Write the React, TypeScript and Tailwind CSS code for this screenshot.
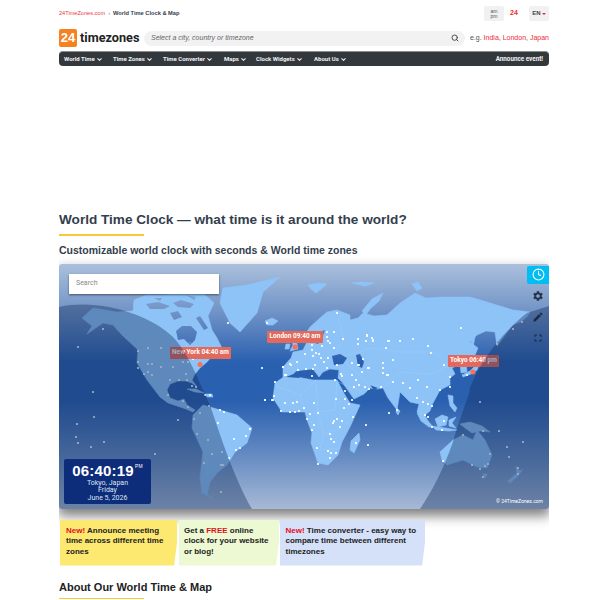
import { ChevronDown, Clock, Search } from "lucide-react";
import { MdEdit, MdFullscreen, MdSettings } from "react-icons/md";

const navItems = [
  { label: "World Time", width: "w-[49px]" },
  { label: "Time Zones", width: "w-[50px]" },
  { label: "Time Converter", width: "w-[61px]" },
  { label: "Maps", width: "w-[32px]" },
  { label: "Clock Widgets", width: "w-[58px]" },
  { label: "About Us", width: "w-auto" },
];

// continents, in page coordinates (the viewBox starts at the map's corner)
const land = [
  // North + Central America, arctic islands included
  "82,318 93,308 117,312 133,311 134,300 146,295 165,295 184,290 204,294 214,303 208,316 212,330 217,338 223,350 213,355 207,362 200,368 195,374 192,380 197,387 192,383 186,381 178,381 170,384 167,390 170,398 178,401 184,399 187,405 195,410 193,412 186,409 177,406 168,403 160,397 147,380 137,363 138,350 122,335 113,325 103,323 97,327 87,334 92,326",
  // South America
  "193,415 203,405 220,410 237,415 252,428 247,443 235,452 227,465 218,472 210,482 207,495 213,498 202,493 200,478 203,452 192,428",
  // Eurasia
  "283,367 291,358 293,352 303,350 307,342 306,333 310,327 320,318 327,312 337,310 350,315 350,320 358,318 363,313 374,316 387,315 400,303 415,293 426,298 440,297 470,297 487,302 513,310 530,312 527,317 522,321 513,325 505,335 497,346 495,332 486,331 477,335 470,342 478,348 473,360 466,362 467,372 461,373 460,364 452,368 455,374 450,378 450,385 440,390 432,405 430,411 425,415 428,422 421,416 417,412 419,404 410,402 400,392 397,410 388,398 383,388 377,389 370,388 364,394 354,399 342,382 338,378 339,370 330,369 323,372 319,377 313,369 303,370 296,371 290,378 283,377",
  // Africa
  "275,383 285,376 297,377 313,380 330,380 337,380 345,395 350,403 360,405 350,427 342,442 338,455 328,465 318,463 311,443 312,433 307,420 305,412 282,412 273,398",
  // Greenland
  "223,288 247,285 280,277 263,292 257,313 240,332 230,323 220,303",
  // Iceland, Britain, Ireland
  "265,321 272,318 278,321 273,325 267,325",
  "292,339 296,340 298,349 290,351 293,345",
  "286,344 290,344 289,349 285,349",
  // Svalbard, Novaya Zemlya and the other polar bits
  "308,285 318,283 327,284 320,290 316,293 311,289",
  "352,283 362,282 374,283 365,286",
  "362,311 372,299 383,293 379,301 370,309 366,315",
  "412,284 418,282 422,288 417,291",
  // Madagascar, Sri Lanka
  "359,433 360,440 354,453 350,450 351,441",
  "397,408 400,411 398,415 396,412",
  // Japan, Sakhalin
  "477,356 480,362 477,370 471,374 463,377 462,375 470,371 475,366",
  "472,333 475,337 473,347 471,341",
  // Philippines, Indonesia, New Guinea
  "448,395 453,396 453,403 457,408 455,412 450,406",
  "417,413 424,416 433,427 429,427 421,421",
  "432,426 445,428 457,430 449,431 436,430",
  "435,419 442,415 448,417 446,425 438,427",
  "449,420 456,417 452,423 456,428 449,426",
  "460,424 470,422 482,426 490,432 480,431 472,433 465,428",
  // Cuba, Hispaniola
  "187,389 196,389 204,393 195,392",
  "206,394 212,394 213,397 207,397",
  // Australia, New Zealand
  "440,452 453,440 463,435 473,440 477,430 485,440 492,455 487,468 477,467 463,460 447,465 442,460",
  "483,474 487,474 485,478",
  "516,466 520,472 517,474",
  "523,469 517,477 510,483 508,481 516,474",
];

// seas and lakes cut back out of the land
const water = [
  "176,331 182,326 191,326 197,332 195,340 190,345 184,339 178,340",
  "196,318 200,316 208,328 204,330",
  "146,304 158,302 170,306 164,309 150,309",
  "173,303 181,300 194,304 190,308 178,307",
  "170,313 178,311 182,317 174,320",
  "154,298 162,298 160,301",
  "186,295 196,297 194,300",
  "286,377 296,373 300,378",
  "332,356 340,354 347,358 343,364 334,365",
  "356,355 360,354 364,362 362,368 358,366",
  "316,336 322,331 325,330 322,339 318,344 315,343",
  "370,385 378,388 374,390",
];

const borders = [
  "M117 312 L117 331",
  "M138 350 L183 348 L190 342 L198 354",
  "M147 375 L160 379 L170 384",
  "M205 406 L212 425 L205 452 L208 478",
  "M276 386 L300 395 L316 380 M300 395 L305 412 M316 380 L318 412 L335 410 L337 380",
  "M318 412 L324 434 L340 428 M324 434 L320 450 L338 448",
  "M338 382 L362 392 M345 362 L370 385 L384 387 L400 372 L430 374 L448 366 L436 352 L400 352 L372 348 L344 356",
  "M306 336 L316 358 M338 318 L344 340 L336 350",
];

const cities = [
  [337, 313], [267, 323], [327, 332], [334, 332], [327, 337], [343, 339], [358, 339], [367, 336], [372, 338], [373, 341],
  [366, 341], [388, 341], [358, 344], [328, 341], [330, 343], [322, 346], [334, 348], [312, 345], [312, 350], [305, 354],
  [316, 353], [319, 354], [313, 356], [328, 358], [324, 362], [321, 358], [352, 363], [363, 359], [358, 365], [383, 363],
  [393, 360], [383, 368], [368, 368], [297, 362], [283, 367], [291, 365], [298, 370], [306, 369], [313, 369], [315, 365],
  [337, 365], [352, 375], [362, 372], [387, 375], [341, 374], [342, 376], [327, 368], [262, 368], [285, 375],
  [275, 382], [286, 375], [265, 400], [273, 400], [274, 396], [285, 403], [293, 403], [297, 402], [304, 408], [314, 403],
  [281, 411], [290, 412], [295, 412], [299, 411], [310, 414], [318, 413], [307, 419], [314, 425], [312, 430], [336, 399],
  [345, 399], [349, 404], [344, 408], [353, 417], [337, 419], [333, 423], [334, 421], [342, 421], [340, 427], [330, 434],
  [331, 439], [334, 442], [317, 448], [328, 451], [331, 453], [336, 453], [330, 458], [318, 464], [356, 443], [368, 445],
  [366, 425], [389, 413], [397, 410], [381, 387], [369, 389], [365, 387], [359, 385], [354, 387], [356, 380], [345, 391],
  [352, 400], [335, 380], [312, 376], [383, 373], [388, 375], [393, 382], [250, 429],
  [461, 328], [413, 339], [400, 341], [389, 341], [373, 340], [367, 335], [343, 339], [386, 348], [428, 346], [431, 353],
  [444, 365], [450, 377], [369, 368], [359, 365], [403, 383], [410, 388], [427, 387], [418, 380], [467, 375], [440, 390],
  [450, 387], [417, 398], [423, 402], [428, 404], [432, 406], [425, 415], [428, 417], [432, 427], [442, 430], [444, 421],
  [480, 402], [463, 435], [483, 431], [499, 431], [507, 447], [509, 457], [523, 442], [490, 454], [488, 464], [485, 466],
  [480, 469], [472, 465], [483, 477], [443, 461], [518, 468], [518, 474], [522, 322], [513, 329], [497, 344],
  [103, 329], [78, 347], [138, 351], [148, 348], [161, 348], [138, 362], [148, 364], [152, 364], [161, 367], [173, 367],
  [138, 368], [144, 374], [152, 375], [148, 372], [186, 374], [170, 380], [179, 380], [187, 380], [192, 386], [196, 387],
  [183, 362], [188, 362], [193, 359], [228, 323], [283, 367], [290, 364],
  [93, 392], [94, 417], [77, 424], [76, 437], [78, 443], [91, 447], [104, 442], [155, 454], [178, 420], [168, 395],
  [183, 401], [188, 407], [194, 419], [200, 413], [209, 406], [220, 410], [224, 412], [218, 423], [197, 434], [208, 440],
  [234, 439], [246, 436], [250, 429], [212, 454], [236, 450], [240, 448], [222, 452], [229, 458], [204, 463], [221, 465],
  [223, 465], [221, 492], [205, 395], [210, 395], [265, 400], [272, 400],
];

const markers = [
  [200, 364.5],
  [295, 347],
  [473, 372],
];

const mapLabels = [
  { text: "New York 04:40 am", pos: "left-[111px] top-[83px] w-[61px]" },
  { text: "London 09:40 am", pos: "left-[208px] top-[67px] w-[56px]" },
  { text: "Tokyo 06:40 pm", pos: "left-[389px] top-[91px] w-[51px]" },
];

const WorldMap = () => {
  return (
    <svg viewBox="59 264 490 245" className="block w-full h-full">
      <defs>
        <linearGradient id="sea" gradientUnits="userSpaceOnUse" x1="0" y1="264" x2="0" y2="509">
          <stop offset="0" stopColor="#abc0dc" />
          <stop offset="0.2" stopColor="#6f92c6" />
          <stop offset="0.4" stopColor="#2a60b0" />
          <stop offset="0.56" stopColor="#2a60b0" />
          <stop offset="0.78" stopColor="#658bc2" />
          <stop offset="1" stopColor="#a6b9d6" />
        </linearGradient>
      </defs>
      <rect x="59" y="264" width="490" height="245" fill="url(#sea)" />
      {land.map((points) => (
        <polygon key={points} points={points} fill="#8ec3f8" strokeLinejoin="round" stroke="#8ec3f8" strokeWidth="0.6" />
      ))}
      {water.map((points) => (
        <polygon key={points} points={points} fill="url(#sea)" />
      ))}
      {borders.map((d) => (
        <path key={d} d={d} fill="none" stroke="#a2cefa" strokeWidth="0.4" />
      ))}
      {cities.map(([x, y], i) => (
        <rect key={i} x={x - 0.9} y={y - 0.9} width="1.8" height="1.8" rx="0.5" fill="#ffffff" />
      ))}
      {markers.map(([x, y]) => (
        <circle key={x} cx={x} cy={y} r="2.5" fill="#ff6e4d" />
      ))}
    </svg>
  );
};

// the dark part of the globe, sits on top of the labels too
const NightShade = () => {
  return (
    <svg viewBox="59 264 490 245" className="absolute inset-0 w-full h-full">
      <path
        d="M59 307 C100 298 150 315 173 337 C190 355 200 385 210 405 C220 435 235 480 252 509 L59 509 Z"
        fill="#102a5a"
        fillOpacity="0.38"
      />
      <path
        d="M420 509 C440 480 450 450 453 442 C462 410 470 395 470 388 C480 360 505 330 527 313 L549 306 L549 509 Z"
        fill="#102a5a"
        fillOpacity="0.38"
      />
    </svg>
  );
};

export default function App() {
  return (
    <div className="ml-[59px] w-[490px] h-[600px] overflow-hidden font-['Liberation_Sans',sans-serif] text-[#333e4d]">
      {/* top strip */}
      <div className="flex items-center h-[29px] pt-[3px] pb-[5px]">
        <span className="text-[5.6px] text-[#f0353f]">24TimeZones.com</span>
        <span className="text-[5.6px] ml-[3px] text-[#4a90c0]">›</span>
        <span className="text-[5.7px] font-bold ml-[3px]">World Time Clock &amp; Map</span>
        <div className="ml-auto flex items-center">
          <div className="w-[20px] h-[15px] rounded-[2px] bg-[#f1f1f2] flex flex-col items-center justify-center text-[5px] leading-[5px] text-[#555]">
            <span>am</span>
            <span>pm</span>
          </div>
          <span className="ml-[6px] w-[19px] text-[7px] font-bold text-[#f0282d]">24</span>
          <div className="w-[20px] h-[15px] rounded-[2px] bg-[#f1f1f2] flex items-center justify-center text-[6px] font-bold text-[#444]">
            EN
            <span className="ml-[1px] border-x-[2px] border-t-[2px] border-x-transparent border-t-[#f0282d]" />
          </div>
        </div>
      </div>

      {/* logo + search */}
      <div className="flex items-center h-[18px]">
        <div className="w-[18px] h-[18px] rounded-[2px] bg-[#f58220] flex items-center justify-center text-white font-bold text-[13px]">
          24
        </div>
        <span className="ml-[3px] w-[59px] text-[12.7px] font-bold text-[#222] font-['Roboto',sans-serif]">timezones</span>
        <div className="ml-[5px] flex items-center w-[321px] h-[15px] rounded-full bg-[#f2f2f3] pl-[7px] pr-[6px]">
          <span className="italic text-[7px] text-[#666]">Select a city, country or timezone</span>
          <Search className="ml-auto w-[8px] h-[8px] text-[#333]" strokeWidth={2.5} />
        </div>
        <span className="ml-[5px] text-[7px] whitespace-nowrap text-[#555]">
          e.g. <span className="text-[#f0283c]">India</span>, <span className="text-[#f0283c]">London</span>,{" "}
          <span className="text-[#f0283c]">Japan</span>
        </span>
      </div>

      {/* nav */}
      <div className="flex items-center h-[15px] mt-[4px] rounded-[4px] bg-[#33383d] pl-[5px] pr-[6px] text-[6px] leading-none font-bold text-[#f2f2f2] border-t border-[#8a8d90] font-['Roboto',sans-serif]">
        {navItems.map((item) => (
          <div key={item.label} className={`flex items-center whitespace-nowrap ${item.width}`}>
            {item.label}
            <ChevronDown className="w-[7px] h-[7px] ml-[1px]" strokeWidth={3.5} />
          </div>
        ))}
        <span className="ml-auto text-[6.3px] leading-none">Announce event!</span>
      </div>

      {/* title block */}
      <h1 className="mt-[145px] text-[13.6px] leading-[18px] font-bold">World Time Clock — what time is it around the world?</h1>
      <div className="mt-[5px] w-[85px] h-[1.5px] bg-[#fbc63d]" />
      <h2 className="mt-[8px] text-[10.5px] leading-[13px] font-bold">Customizable world clock with seconds &amp; World time zones</h2>

      {/* map */}
      <div className="mt-[7px] w-[490px] h-[245px] rounded-[3px] shadow-[0_6px_12px_1px_rgba(0,0,0,0.5)]">
        <div className="relative w-full h-full rounded-[3px] overflow-hidden font-['Roboto',sans-serif]">
          <WorldMap />
          {mapLabels.map((l) => (
            <div
              key={l.text}
              className={`absolute ${l.pos} h-[12px] rounded-[1px] bg-[#e2695c] flex items-center justify-center text-[6.5px] font-bold text-white whitespace-nowrap`}
            >
              {l.text}
            </div>
          ))}
          <NightShade />
          <div className="absolute left-[10px] top-[10px] w-[150px] h-[20px] bg-white flex items-center pl-[7px] text-[7px] leading-none text-[#888] shadow-[0_1px_2px_rgba(0,0,0,0.5)]">
            Search
          </div>
          <div className="absolute right-0 top-[2px] w-[22px] h-[18px] rounded-l-[2px] bg-[#00bdf4] flex items-center justify-center">
            <Clock className="w-[13px] h-[13px] text-white" strokeWidth={2} />
          </div>
          <MdSettings className="absolute right-[5px] top-[26px] w-[12px] h-[12px] text-[#263349]" />
          <MdEdit className="absolute right-[5px] top-[47px] w-[12px] h-[12px] text-[#1e2a40]" />
          <MdFullscreen className="absolute right-[5px] top-[68px] w-[12px] h-[12px] text-[#1e2a40]" />
          <div className="absolute left-[5px] bottom-[5px] w-[87px] h-[45px] rounded-[2px] bg-[#0d2c7a] flex flex-col items-center text-white pt-[3px]">
            <div className="flex items-start font-['Liberation_Sans',sans-serif] font-bold text-[15px] leading-[18px] tracking-[0.2px]">
              06:40:19
              <span className="text-[5px] leading-[8px] font-normal ml-[1px]">PM</span>
            </div>
            <div className="text-[7px] leading-[7.5px] text-[#dbe4f5] text-center">
              <div>Tokyo, Japan</div>
              <div>Friday</div>
              <div>June 5, 2026</div>
            </div>
          </div>
          <span className="absolute right-[6px] bottom-[5px] text-[5px] leading-[6px] text-white">© 24TimeZones.com</span>
        </div>
      </div>

      {/* promo notes */}
      <div className="flex mt-[11px] ml-[1px] text-[8px] leading-[10.5px] font-bold text-[#222]">
        <div className="w-[117px] h-[46px] pl-[6px] pr-[7px] pt-[6px] bg-[#fde870] [clip-path:polygon(0_0,100%_0,100%_50%,97.5%_100%,0_100%)]">
          <span className="text-[#e0101a]">New!</span> Announce meeting time across different time zones
        </div>
        <div className="w-[100px] h-[46px] ml-[2px] pl-[5px] pr-[8px] pt-[6px] bg-[#ecf9d2] [clip-path:polygon(0_0,100%_0,100%_50%,97%_100%,0_100%)]">
          Get a <span className="text-[#e0101a]">FREE</span> online clock for your website or blog!
        </div>
        <div className="w-[145px] h-[46px] ml-[1px] pl-[5.5px] pr-[8px] pt-[6px] bg-[#d5e1f9] [clip-path:polygon(0_0,100%_0,100%_50%,98%_100%,0_100%)]">
          <span className="text-[#e0101a]">New!</span> Time converter - easy way to compare time between different timezones
        </div>
      </div>

      <h2 className="mt-[15px] text-[11px] leading-[13px] font-bold text-[#222]">About Our World Time &amp; Map</h2>
      <div className="mt-[4px] w-[85px] h-[1.5px] bg-[#fbc63d]" />
    </div>
  );
}
